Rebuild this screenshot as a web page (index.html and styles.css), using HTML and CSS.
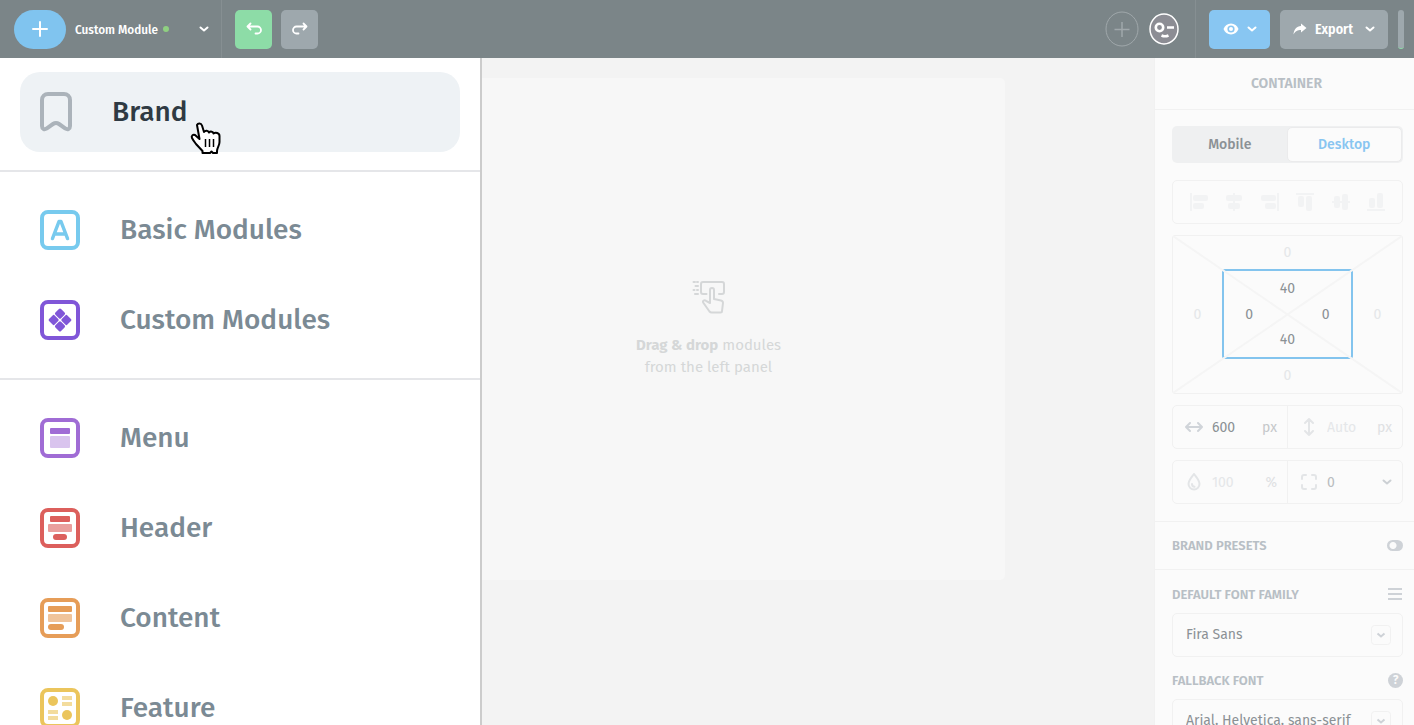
FILE: index.html
```html
<!DOCTYPE html>
<html lang="en">

<head>
    <meta charset="utf-8">
    <title>Custom Module | Email Editor</title>
    <meta name="viewport" content="width=device-width, initial-scale=1.0">
    <link rel="stylesheet" href="styles.css">
</head>

<body>
    <svg class="sprite" aria-hidden="true">
        <symbol id="chevron" viewBox="0 0 10 6">
            <path d="M1.5 1.5 5 4.5l3.5-3" fill="none" stroke="currentColor" stroke-width="2" stroke-linecap="round" stroke-linejoin="round" />
        </symbol>
        <symbol id="undo" viewBox="0 0 16 14">
            <path d="M4.500 1.500 1.500 4.500l3 3M2 4.500h9.500a3 3 0 0 1 0 7H9.500" fill="none" stroke="currentColor" stroke-width="1.800" stroke-linecap="round" stroke-linejoin="round" />
        </symbol>
    </svg>

    <header class="header">
        <button class="add" aria-label="Add module">
            <svg width="16" height="16" viewBox="0 0 16 16"><path d="M8 1v14M1 8h14" fill="none" stroke="currentColor" stroke-width="2" stroke-linecap="round" /></svg>
        </button>
        <button class="module">
            <span>Custom Module</span>
            <span class="dot"></span>
            <svg class="chevron" width="10" height="6"><use href="#chevron" /></svg>
        </button>
        <div class="history">
            <button class="undo" aria-label="Undo"><svg width="16" height="14"><use href="#undo" /></svg></button>
            <button class="redo" aria-label="Redo"><svg width="16" height="14"><use href="#undo" /></svg></button>
        </div>
        <div class="people">
            <button class="invite" aria-label="Invite">
                <svg width="34" height="36" viewBox="0 0 34 36">
                    <ellipse cx="17" cy="18" rx="16" ry="17" fill="none" stroke="currentColor" />
                    <path d="M17 11v15M9.500 18.500h15" stroke="currentColor" stroke-width="1.500" />
                </svg>
            </button>
            <button class="avatar" aria-label="Account">
                <svg width="30" height="32" viewBox="0 0 30 32">
                    <ellipse cx="15" cy="16" rx="14" ry="15" fill="#8c8d94" stroke="currentColor" stroke-width="1.500" />
                    <circle cx="10.500" cy="14.500" r="3.700" fill="none" stroke="currentColor" stroke-width="2.600" />
                    <path d="M18 14.500h7M12.500 22.500q3.500 1.500 7 0" fill="none" stroke="currentColor" stroke-width="2.600" />
                </svg>
            </button>
        </div>
        <div class="actions">
            <button class="preview" aria-label="Preview">
                <svg width="16" height="12" viewBox="0 0 16 12">
                    <path d="M8 .5C4.500.5 1.800 2.700.5 6 1.800 9.300 4.500 11.500 8 11.500S14.200 9.300 15.500 6C14.200 2.700 11.500.5 8 .5z" fill="currentColor" />
                    <circle cx="8" cy="6" r="3.600" fill="#88c6f2" />
                    <circle cx="8" cy="6" r="2" fill="currentColor" />
                </svg>
                <svg width="10" height="6"><use href="#chevron" /></svg>
            </button>
            <button class="export">
                <svg width="14" height="12" viewBox="0 0 14 12"><path d="M8 .5 13.500 5 8 9.500V7C4.500 7 2.500 8 .5 11.500.8 6.500 3.500 3.500 8 3z" fill="currentColor" /></svg>
                <span>Export</span>
                <svg width="10" height="6"><use href="#chevron" /></svg>
            </button>
            <button class="more" aria-label="More"></button>
        </div>
    </header>

    <main class="workspace">
        <section class="canvas">
            <div class="sheet">
                <svg width="34" height="34" viewBox="0 0 34 34" fill="none" stroke="currentColor" stroke-width="2" stroke-linecap="round" stroke-linejoin="round">
                    <path d="M14.500 14H11a2 2 0 0 1-2-2V4a2 2 0 0 1 2-2h19a2 2 0 0 1 2 2v8a2 2 0 0 1-2 2h-3" />
                    <path d="M18 23V10a2 2 0 0 1 4 0v9l7 1.500a2.500 2.500 0 0 1 2 2.500l-1 8a1.500 1.500 0 0 1-1.500 1.500H20a3 3 0 0 1-2.500-1l-6-8.500c-1.500-2.500 1-3.500 2.500-2.200z" />
                    <path d="M1.500 2H3M5 2h1M3.500 6H6M1.500 10h1M5 10h1M3 14h3" />
                </svg>
                <p><b>Drag &amp; drop</b> modules<br>from the left panel</p>
            </div>
        </section>

        <aside class="settings">
            <h2>Container</h2>
            <div class="layout">
                <div class="tabs">
                    <button>Mobile</button>
                    <button class="active">Desktop</button>
                </div>
                <div class="align">
                    <button aria-label="Align left"><svg width="18" height="18"><path d="M0 0h2v18H0z" /><rect x="3" y="2" width="15" height="6" rx="2" /><rect x="3" y="10" width="11" height="6" rx="2" /></svg></button>
                    <button aria-label="Align center"><svg width="18" height="18"><path d="M8 0h2v18H8z" /><rect x="1" y="2" width="16" height="6" rx="2" /><rect x="3" y="10" width="12" height="6" rx="2" /></svg></button>
                    <button aria-label="Align right"><svg width="18" height="18"><path d="M16 0h2v18h-2z" /><rect x="0" y="2" width="15" height="6" rx="2" /><rect x="4" y="10" width="11" height="6" rx="2" /></svg></button>
                    <button aria-label="Align top"><svg width="18" height="18"><path d="M0 0h18v2H0z" /><rect x="2" y="3" width="6" height="11" rx="2" /><rect x="10" y="3" width="6" height="15" rx="2" /></svg></button>
                    <button aria-label="Align middle"><svg width="18" height="18"><path d="M0 8h18v2H0z" /><rect x="2" y="3" width="6" height="12" rx="2" /><rect x="10" y="1" width="6" height="16" rx="2" /></svg></button>
                    <button aria-label="Align bottom"><svg width="18" height="18"><path d="M0 16h18v2H0z" /><rect x="2" y="5" width="6" height="10" rx="2" /><rect x="10" y="0" width="6" height="15" rx="2" /></svg></button>
                </div>
                <div class="spacing">
                    <svg class="lines" viewBox="0 0 230 158" preserveAspectRatio="none"><path d="M0 0 230 158M230 0 0 158" /></svg>
                    <input class="top" value="0" aria-label="Margin top">
                    <input class="left" value="0" aria-label="Margin left">
                    <div class="padding">
                        <input class="top" value="40" aria-label="Padding top">
                        <input class="left" value="0" aria-label="Padding left">
                        <input class="right" value="0" aria-label="Padding right">
                        <input class="bottom" value="40" aria-label="Padding bottom">
                    </div>
                    <input class="right" value="0" aria-label="Margin right">
                    <input class="bottom" value="0" aria-label="Margin bottom">
                </div>
                <div class="pair">
                    <label class="field">
                        <svg width="18" height="18" viewBox="0 0 18 18"><path d="M5 5 1 9l4 4M13 5l4 4-4 4M1 9h16" /></svg>
                        <input value="600" aria-label="Width">
                        <span>px</span>
                    </label>
                    <label class="field muted">
                        <svg width="18" height="18" viewBox="0 0 18 18"><path d="M5 5l4-4 4 4M5 13l4 4 4-4M9 1v16" /></svg>
                        <input placeholder="Auto" aria-label="Height">
                        <span>px</span>
                    </label>
                </div>
                <div class="pair">
                    <label class="field muted">
                        <svg width="18" height="18" viewBox="0 0 18 18"><path d="M9 1C6 5 3.500 7.500 3.500 11a5.500 5.500 0 0 0 11 0C14.500 7.500 12 5 9 1zM7 11q0 2.500 2.500 2.800" /></svg>
                        <input placeholder="100" aria-label="Opacity">
                        <span>%</span>
                    </label>
                    <label class="field radius">
                        <svg width="18" height="18" viewBox="0 0 18 18"><path d="M6 2H4a2 2 0 0 0-2 2v2M12 2h2a2 2 0 0 1 2 2v2M6 16H4a2 2 0 0 1-2-2v-2M12 16h2a2 2 0 0 0 2-2v-2" /></svg>
                        <input value="0" aria-label="Border radius">
                        <svg class="arrow" width="10" height="6"><use href="#chevron" /></svg>
                    </label>
                </div>
            </div>
            <div class="presets">
                <label for="presets">Brand presets</label>
                <input type="checkbox" id="presets">
            </div>
            <div class="fonts">
                <div class="label">
                    <label for="family">Default font family</label>
                    <svg width="14" height="12" viewBox="0 0 14 12"><path d="M0 1h14M0 6h14M0 11h14" stroke="currentColor" stroke-width="2" /></svg>
                </div>
                <div class="select">
                    <select id="family"><option>Fira Sans</option></select>
                    <svg width="20" height="20" viewBox="0 0 20 20"><rect x=".5" y=".5" width="19" height="19" rx="3" /><path d="m6.500 8.500 3.500 3 3.500-3" /></svg>
                </div>
                <div class="label">
                    <label for="fallback">Fallback font</label>
                    <button class="help" aria-label="Help">?</button>
                </div>
                <div class="select">
                    <select id="fallback"><option>Arial, Helvetica, sans-serif</option></select>
                    <svg width="20" height="20" viewBox="0 0 20 20"><rect x=".5" y=".5" width="19" height="19" rx="3" /><path d="m6.500 8.500 3.500 3 3.500-3" /></svg>
                </div>
            </div>
        </aside>

        <nav class="drawer">
            <div class="group brand">
                <a href="#brand">
                    <svg width="32" height="40" viewBox="0 0 32 40"><path d="M8 2h16a6 6 0 0 1 6 6v26c0 3-2.500 4-4.500 2.500L19 32q-3-2-6 0l-6.500 4.500C4.500 38 2 37 2 34V8a6 6 0 0 1 6-6z" fill="none" stroke="#abb3ba" stroke-width="4" /></svg>
                    Brand
                </a>
                <svg class="cursor" width="32" height="34" viewBox="0 0 32 34">
                    <path d="M7 4c1-2 4-2 5 .5l2 6.500c1.500-2 4-1.500 5 .5 1.500-1.500 4-1 4.500 1 2-1.500 6-.5 6 2.500v6c0 4-2.500 5.500-2.500 9V32h-4l-1.500-1.500L20 32h-7.500v-2L6 23c-2-2.500-3-4-4-6s1-4 3-3l4.500 4z" fill="#fff" stroke="#000" stroke-width="2" stroke-linejoin="round" />
                    <path d="M15.500 18v8M19.500 18v8M23.500 18v8" stroke="#000" stroke-width="1.500" />
                </svg>
            </div>
            <div class="group">
                <a href="#basic">
                    <svg class="icon basic" viewBox="0 0 40 40"><rect class="frame" x="2" y="2" width="36" height="36" rx="6" /><path d="M12.500 28.500 19 11.500h2l6.500 17M15 24h10" fill="none" stroke="currentColor" stroke-width="3.500" stroke-linecap="round" stroke-linejoin="round" /></svg>
                    Basic Modules
                </a>
                <a href="#custom">
                    <svg class="icon custom" viewBox="0 0 40 40"><rect class="frame" x="2" y="2" width="36" height="36" rx="6" /><g transform="rotate(45 20 20)"><rect x="11.500" y="11.500" width="8" height="8" rx="1.500" /><rect x="20.500" y="11.500" width="8" height="8" rx="1.500" /><rect x="11.500" y="20.500" width="8" height="8" rx="1.500" /><rect x="20.500" y="20.500" width="8" height="8" rx="1.500" /></g></svg>
                    Custom Modules
                </a>
            </div>
            <div class="group">
                <a href="#menu">
                    <svg class="icon menu" viewBox="0 0 40 40"><rect class="frame" x="2" y="2" width="36" height="36" rx="6" /><rect x="10" y="10" width="20" height="6" rx="1" /><rect class="light" x="10" y="18" width="20" height="12" rx="1" /></svg>
                    Menu
                </a>
                <a href="#header">
                    <svg class="icon head" viewBox="0 0 40 40"><rect class="frame" x="2" y="2" width="36" height="36" rx="6" /><rect x="10" y="8" width="20" height="6" rx="1" /><rect class="light" x="8" y="16" width="24" height="8" rx="1" /><rect x="13" y="26" width="14" height="6" rx="3" /></svg>
                    Header
                </a>
                <a href="#content">
                    <svg class="icon content" viewBox="0 0 40 40"><rect class="frame" x="2" y="2" width="36" height="36" rx="6" /><rect x="8" y="8" width="24" height="6" rx="1" /><rect class="light" x="8" y="16" width="24" height="8" rx="1" /><rect x="8" y="26" width="16" height="6" rx="3" /></svg>
                    Content
                </a>
                <a href="#feature">
                    <svg class="icon feature" viewBox="0 0 40 40"><rect class="frame" x="2" y="2" width="36" height="36" rx="6" /><circle cx="13" cy="13" r="5" /><circle cx="27" cy="27" r="5" /><path class="light" d="M22 8h10v4H22zM22 14h10v4H22zM8 22h10v4H8zM8 28h10v4H8z" /></svg>
                    Feature
                </a>
            </div>
        </nav>
    </main>
</body>

</html>
```
FILE: styles.css
```css
* {
    box-sizing: border-box;
}

body {
    font-family: "Fira Sans", "Noto Sans", sans-serif;
    font-size: 14px;
    color: #8b9195;
    margin: 0;
    height: 100vh;
    display: flex;
    flex-direction: column;
    overflow: hidden;
}

button,
input,
select {
    font: inherit;
    color: inherit;
    background: none;
    border: 0;
    margin: 0;
    padding: 0;
}

svg {
    flex: none;
    display: block;
}

.sprite {
    position: absolute;
    width: 0;
    height: 0;
}

/* top bar */
.header {
    flex: none;
    display: flex;
    align-items: center;
    height: 58px;
    padding: 0 10px 0 14px;
    background-color: #7b8588;
    color: #fff;
    font-family: "Fira Sans Condensed", "Fira Sans", "Noto Sans", sans-serif;
}

.header button {
    display: flex;
    align-items: center;
    justify-content: center;
    height: 39px;
    border-radius: 5px;
}

.header .add {
    width: 52px;
    border-radius: 20px;
    background-color: #80c4ef;
}

.header .module {
    width: 156px;
    height: 58px;
    padding: 0 12px 0 9px;
    border-right: 1px solid #868f92;
    border-radius: 0;
    font-size: 13px;
    font-weight: 500;
}

.dot {
    width: 6px;
    height: 6px;
    margin-left: 5px;
    border-radius: 3px;
    background-color: #8fd081;
}

.module .chevron {
    margin-left: auto;
}

.history {
    display: flex;
    gap: 9px;
    margin-left: 13px;
}

.history button {
    width: 37px;
    background-color: #8ddca7;
}

.history .redo {
    background-color: #9ea8ad;
}

.redo svg {
    transform: scaleX(-1);
}

.people {
    display: flex;
    align-items: center;
    gap: 10px;
    height: 58px;
    margin-left: auto;
    padding-right: 16px;
    border-right: 1px solid #868f92;
}

.people .invite {
    color: #a0a8ab;
}

.actions {
    display: flex;
    gap: 10px;
    margin-left: 13px;
}

.actions .preview {
    width: 61px;
    gap: 8px;
    background-color: #88c6f2;
}

.actions .export {
    width: 108px;
    gap: 8px;
    background-color: #9ea8ad;
    font-weight: 600;
}

.export span {
    margin-right: 4px;
}

.actions .more {
    width: 6px;
    border-radius: 3px;
    border-bottom: 1px solid #8ddca7;
    background-color: #9ea8ad;
}

/* editor */
.workspace {
    flex: 1;
    display: flex;
    min-height: 0;
    position: relative;
}

.canvas {
    flex: 1;
    display: flex;
    justify-content: center;
    align-items: flex-start;
    padding: 20px 0 0 263px;
    background-color: #f3f3f3;
}

.sheet {
    flex: 0 1 592px;
    display: flex;
    flex-direction: column;
    align-items: center;
    padding: 202px 0;
    border-radius: 5px;
    background-color: #f7f7f7;
    color: #d5d7d8;
    font-size: 15px;
}

.sheet p {
    margin: 20px 0 0 0;
    line-height: 22px;
    text-align: center;
}

/* settings panel */
.settings {
    flex: none;
    width: 260px;
    border-left: 1px solid #f1f1f1;
    background-color: #fbfbfb;
}

.settings h2,
.settings .presets,
.settings .label {
    font-size: 13px;
    font-weight: 600;
    text-transform: uppercase;
    color: #b8bfc5;
}

.settings h2 {
    margin: 0;
    padding-left: 4px;
    font-size: 14px;
    line-height: 51px;
    text-align: center;
    border-bottom: 1px solid #f1f1f1;
}

.layout {
    display: flex;
    flex-direction: column;
    gap: 11px;
    padding: 16px 11px 17px 17px;
    border-bottom: 1px solid #f1f1f1;
}

.tabs {
    display: flex;
    height: 37px;
    margin-bottom: 6px;
    padding: 1px;
    border-radius: 5px;
    background-color: #eff0f1;
}

.tabs button {
    flex: 1;
    border-radius: 5px;
    font-weight: 500;
}

.tabs .active {
    background-color: #fbfbfb;
    border: 1px solid #ebebec;
    color: #88c5f1;
}

.align {
    display: flex;
    justify-content: space-around;
    align-items: center;
    height: 44px;
    padding: 0 8px;
    border: 1px solid #f1f1f1;
    border-radius: 5px;
}

.align svg {
    fill: #f2f3f4;
}

.spacing,
.padding {
    display: grid;
    grid-template-areas: ". top ." "left middle right" ". bottom .";
}

.spacing {
    position: relative;
    grid-template-columns: 49px 1fr 49px;
    grid-template-rows: 33px 90px 34px;
    border: 1px solid #f1f1f1;
    border-radius: 3px;
    color: #e5e7e9;
}

.padding {
    grid-area: middle;
    grid-template-columns: 1fr 26px 1fr;
    grid-template-rows: 34px 18px 34px;
    border: 2px solid #83c4ee;
    border-radius: 3px;
    color: #8b9195;
}

/* diagonals behind the margin and padding values */
.lines {
    position: absolute;
    width: 100%;
    height: 100%;
    stroke: #f5f5f5;
    stroke-width: 2;
}

.spacing input {
    position: relative;
    width: 100%;
    text-align: center;
}

.top {
    grid-area: top;
}

.left {
    grid-area: left;
}

.right {
    grid-area: right;
}

.bottom {
    grid-area: bottom;
}

.spacing .bottom {
    padding-bottom: 2px;
}

.pair {
    display: flex;
    height: 44px;
    border: 1px solid #f1f1f1;
    border-radius: 5px;
}

.field {
    flex: 1;
    display: flex;
    align-items: center;
    gap: 9px;
    min-width: 0;
    padding: 0 10px 0 12px;
}

.field + .field {
    border-left: 1px solid #f1f1f1;
}

.field svg {
    fill: none;
    stroke: #d0d4d9;
    stroke-width: 2;
    stroke-linecap: round;
    stroke-linejoin: round;
}

.field input {
    flex: 1;
    width: 0;
}

.field input::placeholder {
    color: #e5e7e9;
    opacity: 1;
}

.field span {
    color: #c5c8ca;
}

.field.muted svg,
.field.radius svg {
    stroke: #e3e5e7;
}

.field.muted span {
    color: #dfe1e3;
}

.field.radius {
    color: #b9bdc0;
}

.field .arrow {
    color: #ccd0d4;
}

.presets {
    display: flex;
    align-items: center;
    justify-content: space-between;
    height: 48px;
    padding: 0 11px 0 17px;
    border-bottom: 1px solid #f1f1f1;
}

.presets input {
    appearance: none;
    width: 16px;
    height: 11px;
    border-radius: 6px;
    background: radial-gradient(circle at 6px 50%, #fbfbfb 3px, #ced2d7 4px);
}

.fonts {
    padding: 13px 11px 0 17px;
}

.label {
    display: flex;
    align-items: center;
    justify-content: space-between;
    height: 22px;
    margin-bottom: 8px;
}

.label svg {
    margin-right: 1px;
    color: #ced2d7;
}

.label .help {
    width: 15px;
    height: 15px;
    border-radius: 50%;
    background-color: #ced2d7;
    color: #fbfbfb;
    font-size: 12px;
    line-height: 15px;
}

.select {
    display: grid;
    align-items: center;
    margin-bottom: 12px;
}

.select select,
.select svg {
    grid-area: 1 / 1;
}

.select select {
    appearance: none;
    width: 100%;
    height: 44px;
    padding: 0 34px 2px 13px;
    border: 1px solid #f1f1f1;
    border-radius: 5px;
}

.select svg {
    justify-self: end;
    margin-right: 12px;
    pointer-events: none;
    fill: none;
    stroke: #f1f1f1;
}

.select svg path {
    stroke: #ced2d7;
    stroke-width: 2;
}

/* modules drawer */
.drawer {
    position: absolute;
    top: 0;
    bottom: 0;
    left: 0;
    width: 482px;
    overflow: hidden;
    border-right: 2px solid #cccccc;
    background-color: #fff;
    font-size: 28px;
    font-weight: 500;
    line-height: 32px;
}

.group {
    padding: 13px 20px;
    border-bottom: 2px solid #e5e6e9;
}

.group a {
    display: flex;
    align-items: center;
    gap: 40px;
    height: 90px;
    padding: 0 20px;
    border-radius: 20px;
    color: #7b8a94;
    text-decoration: none;
}

.brand {
    position: relative;
    padding: 14px 20px 18px;
}

.group.brand a {
    height: 80px;
    background-color: #eef2f5;
    color: #2f3a43;
}

.cursor {
    position: absolute;
    top: 63px;
    left: 190px;
}

.icon {
    width: 40px;
    height: 40px;
    fill: currentColor;
}

.icon .frame {
    fill: none;
    stroke: currentColor;
    stroke-width: 4;
}

.icon .light {
    opacity: .6;
}

.basic {
    color: #77caee;
}

.custom {
    color: #8056d8;
}

.menu {
    color: #a06cd5;
}

.menu .light {
    opacity: .4;
}

.head {
    color: #dc5f5c;
}

.content {
    color: #e69d58;
}

.feature {
    color: #ebc55c;
}
```
